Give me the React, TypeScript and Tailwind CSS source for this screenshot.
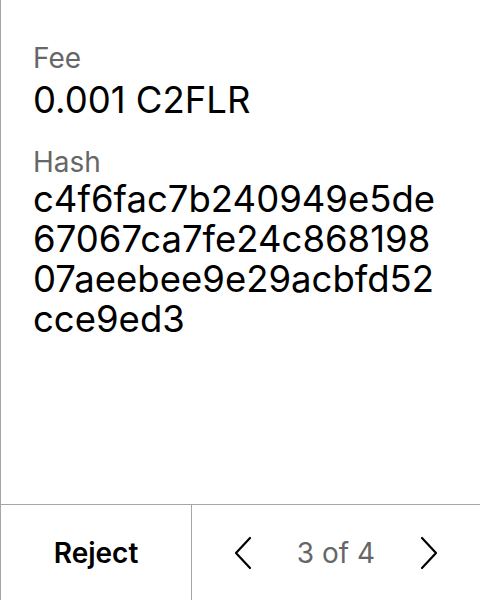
import React from "react";

function ChevronLeft() {
  return (
    <svg width="20" height="34" viewBox="0 0 20 34" fill="none">
      <path d="M17 2 L3 17 L17 32" stroke="#000" strokeWidth="2.2" strokeLinecap="round" strokeLinejoin="round" />
    </svg>
  );
}
function ChevronRight() {
  return (
    <svg width="20" height="34" viewBox="0 0 20 34" fill="none">
      <path d="M3 2 L17 17 L3 32" stroke="#000" strokeWidth="2.2" strokeLinecap="round" strokeLinejoin="round" />
    </svg>
  );
}

const hashLines = ["c4f6fac7b240949e5de", "67067ca7fe24c868198", "07aeebee9e29acbfd52", "cce9ed3"];

export default function App() {
  return (
    <div className="w-[480px] h-[600px] bg-white border-l border-[#a6a6a6] flex flex-col text-black" style={{ fontFamily: "Inter, 'Noto Sans', sans-serif" }}>
      <div className="flex-1 pl-[32px] pr-[32px] pt-[40px]">
        <div className="text-[28px] leading-[36px] text-[#666666]">Fee</div>
        <div className="text-[36.5px] leading-[44px] mt-[2px]">0.001 C2FLR</div>
        <div className="text-[28px] leading-[36px] text-[#666666] mt-[22px]">Hash</div>
        <div className="text-[36.5px] leading-[40px] -mt-px">
          {hashLines.map((l) => (
            <div key={l}>{l}</div>
          ))}
        </div>
      </div>
      <div className="h-[96px] border-t border-[#a6a6a6] flex">
        <div className="w-[191px] border-r border-[#a6a6a6] flex items-center justify-center text-[28px] font-semibold">Reject</div>
        <div className="flex-1 flex items-center justify-center gap-[44px]">
          <ChevronLeft />
          <span className="text-[28px] text-[#666666]">3 of 4</span>
          <ChevronRight />
        </div>
      </div>
    </div>
  );
}
